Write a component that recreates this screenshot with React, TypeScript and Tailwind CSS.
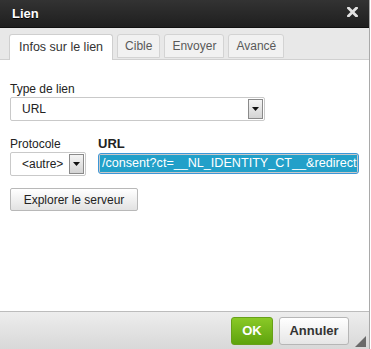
import React from 'react';

const font = { fontFamily: '"Liberation Sans", Arial, sans-serif' };

function Arrow({ className }: { className: string }) {
  return (
    <div className={`flex items-center justify-center border border-[#8a8a8a] bg-gradient-to-b from-[#f4f4f4] to-[#d4d4d4] ${className}`}>
      <svg width="7" height="4" viewBox="0 0 7 4">
        <path d="M0 0h7L3.5 4z" fill="#111" />
      </svg>
    </div>
  );
}

export default function App() {
  const tabs = ['Cible', 'Envoyer', 'Avancé'];

  return (
    <div style={font} className="w-[370px] h-[349px] flex flex-col border-r border-[#a9a9a9] bg-white text-[12px] text-[#222]">
      {/* title bar */}
      <div className="h-[28px] flex items-center justify-between pl-[12px] pr-[11px] bg-gradient-to-b from-[#333] to-[#1f1f1f] border-b border-[#111]">
        <span className="text-[13px] font-bold text-white [text-shadow:0_1px_0_#000]">Lien</span>
        <svg width="11" height="10" viewBox="0 0 11 10" className="mb-[4px]">
          <path d="M1.5 1l8 8M9.5 1l-8 8" stroke="#e2e2e2" strokeWidth="2.8" strokeLinecap="square" />
        </svg>
      </div>

      {/* tabs */}
      <div className="h-[32px] flex items-end gap-[4px] pl-[9px] bg-[#e8e8e8] border-b border-[#d0d0d0]">
        <div className="h-[26px] -mb-px px-[9px] flex items-center bg-white border border-b-0 border-[#cfcfcf] rounded-t-[3px] text-[12.5px] text-[#333]">
          Infos sur le lien
        </div>
        {tabs.map((t) => (
          <div
            key={t}
            className="h-[24px] mb-[1px] px-[7px] flex items-center bg-[#f1f1f1] border border-[#d3d3d3] rounded-t-[3px] text-[12px] text-[#595959]"
          >
            {t}
          </div>
        ))}
      </div>

      {/* content */}
      <div className="flex-1 flex flex-col pl-[10px] pt-[22px]">
        <label className="leading-[14px] mb-[1px]">Type de lien</label>
        <div className="w-[255px] h-[24px] flex items-center border border-[#c9c9c9] rounded-[2px] pl-[11px] pr-[1px]">
          <span className="flex-1">URL</span>
          <Arrow className="w-[15px] h-[20px]" />
        </div>

        <div className="flex mt-[16px]">
          <div className="flex flex-col">
            <label className="leading-[14px] mb-[1px]">Protocole</label>
            <div className="w-[76px] h-[24px] flex items-center border border-[#c9c9c9] rounded-[2px] pl-[11px] pr-[1px]">
              <span className="flex-1">&lt;autre&gt;</span>
              <Arrow className="w-[15px] h-[20px]" />
            </div>
          </div>
          <div className="flex flex-col ml-[12px]">
            <label className="leading-[14px] mb-[1px] font-bold text-[13px]">URL</label>
            <div className="w-[261px] h-[21px] mt-[1px] border border-[#3b97d8] rounded-[3px] bg-[#c9c9c9] p-[1px] overflow-hidden">
              <div className="h-full bg-[#22a0c9] text-white whitespace-nowrap overflow-hidden pl-[2px] leading-[17px] text-[12.6px]">
                /consent?ct=__NL_IDENTITY_CT__&amp;redirect=
              </div>
            </div>
          </div>
        </div>

        <button className="mt-[12px] w-[128px] h-[23px] border border-[#b8b8b8] rounded-[2px] bg-gradient-to-b from-white to-[#e2e2e2] text-[12px] text-[#222]">
          Explorer le serveur
        </button>
      </div>

      {/* footer */}
      <div className="h-[38px] flex items-start justify-end pt-[5px] pr-[20px] gap-[6px] border-t border-[#bcbcbc] bg-gradient-to-b from-[#ededed] to-[#d8d8d8] relative">
        <button className="w-[42px] h-[28px] rounded-[3px] border border-[#67a019] bg-gradient-to-b from-[#8ac926] to-[#5ea30c] text-white font-bold text-[13px]">
          OK
        </button>
        <button className="w-[70px] h-[28px] rounded-[3px] border border-[#b6b6b6] bg-gradient-to-b from-white to-[#e6e6e6] text-[#333] font-bold text-[13px]">
          Annuler
        </button>
        <svg width="11" height="11" viewBox="0 0 11 11" className="absolute right-[3px] bottom-[2px]">
          <path d="M11 0v11H0z" fill="#6a6a6a" />
        </svg>
      </div>
    </div>
  );
}
